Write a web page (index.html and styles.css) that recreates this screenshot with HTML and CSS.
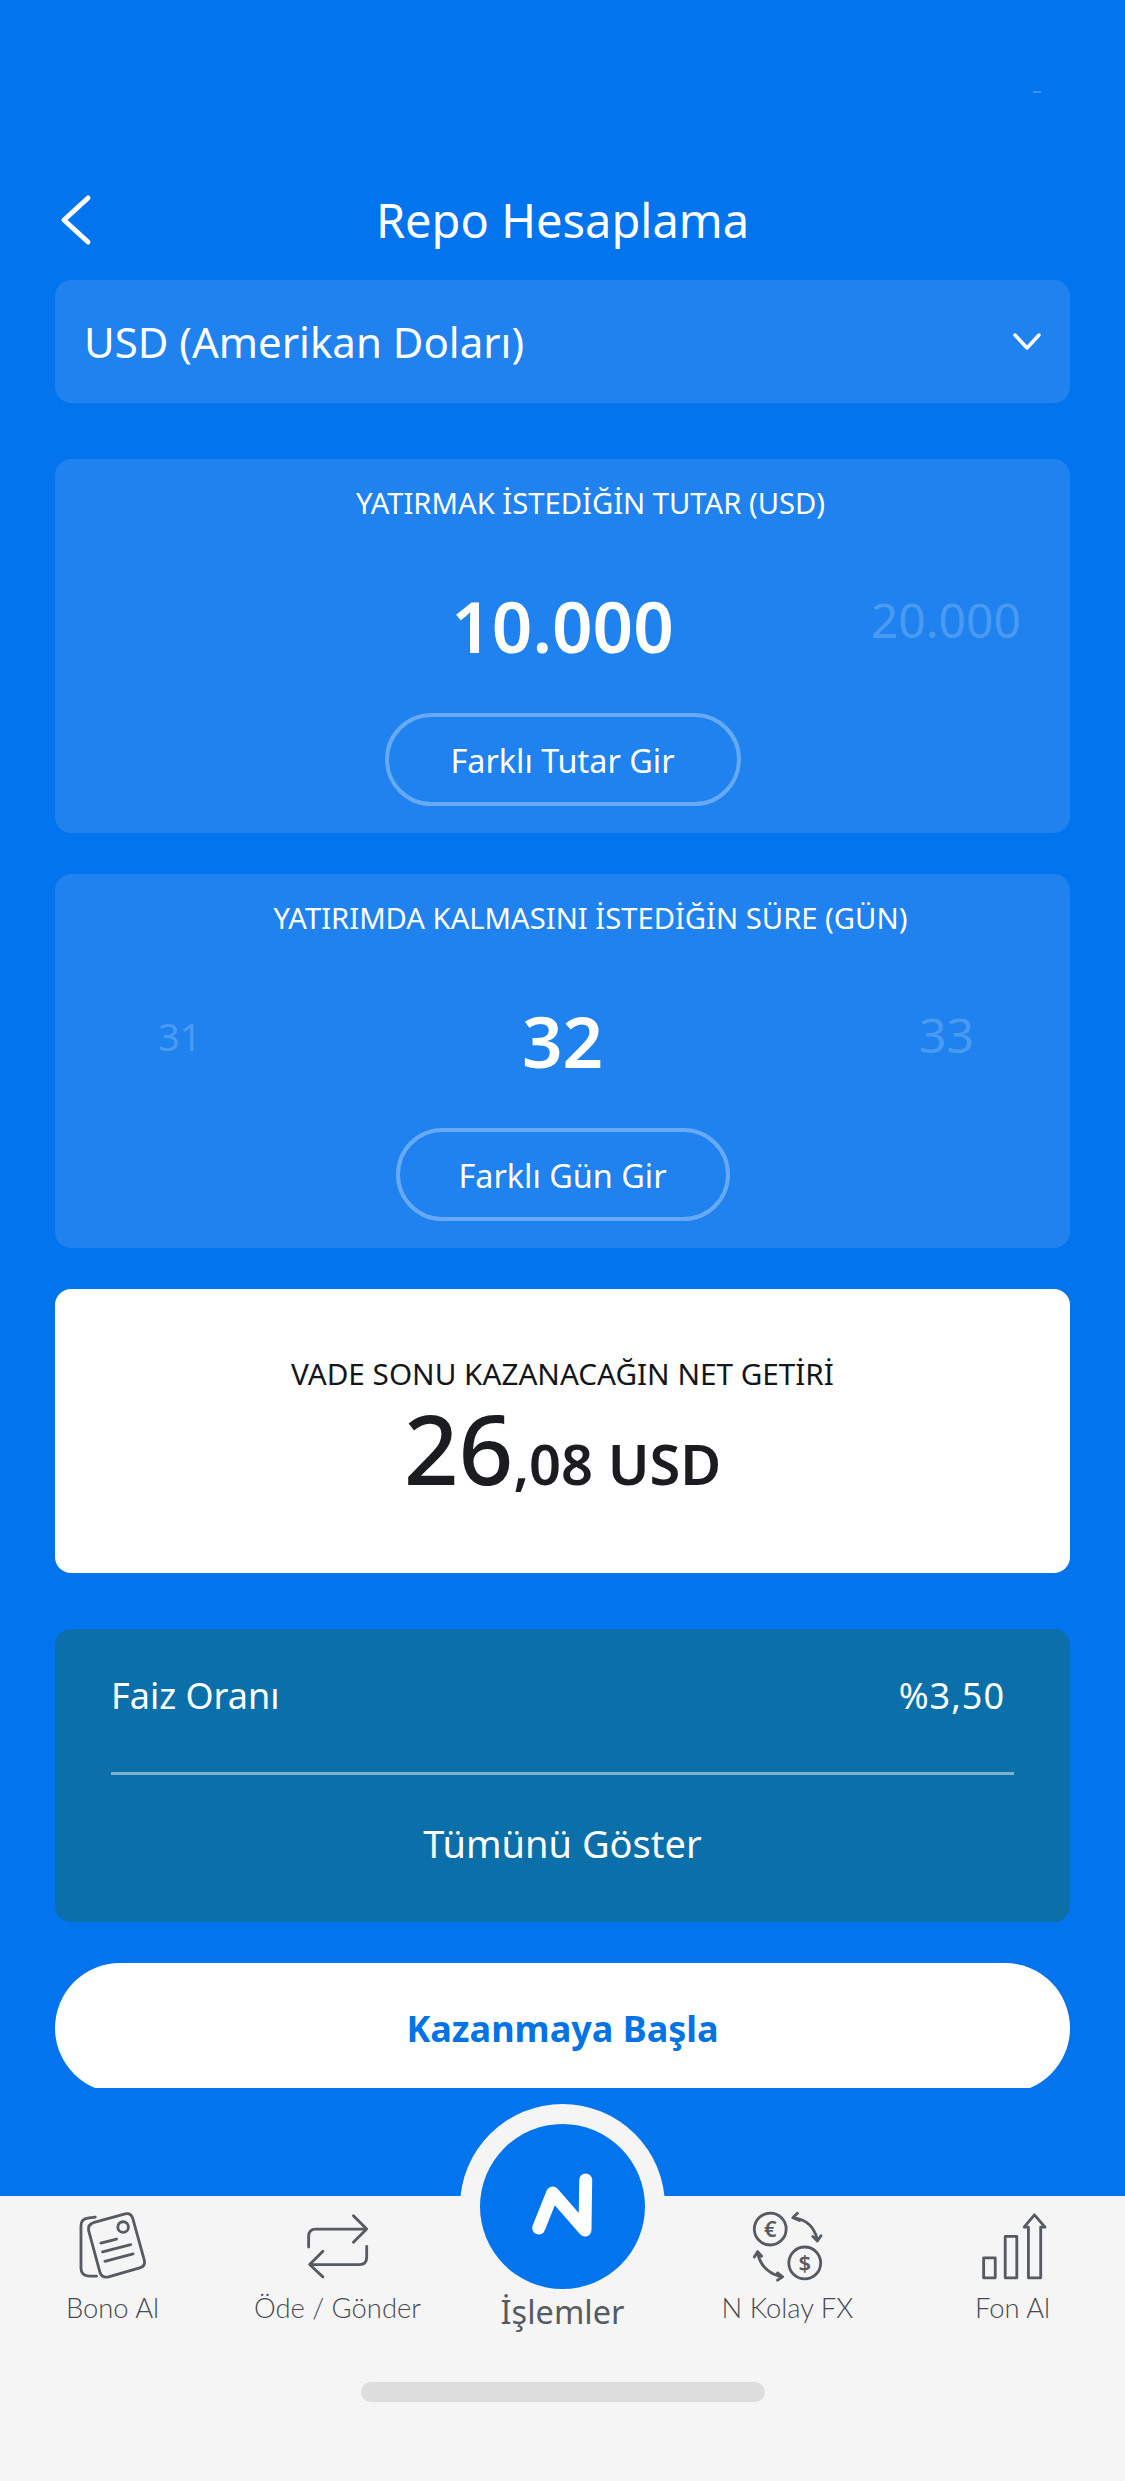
FILE: index.html
```html
<!DOCTYPE html>
<html lang="tr">
<head>
    <meta charset="UTF-8">
    <meta name="viewport" content="width=device-width, initial-scale=1.0">
    <title>Repo Hesaplama</title>
    <link rel="stylesheet" href="styles.css">
</head>
<body>
    <div class="screen">
        <div class="status-dash"></div>

        <!-- Header -->
        <header class="header">
            <svg class="back" viewBox="0 0 34 52"><path d="M29 4 L5 26 L29 48"/></svg>
            <h1>Repo Hesaplama</h1>
        </header>

        <main class="content">
            <!-- Currency -->
            <div class="card select-card">
                <span>USD (Amerikan Doları)</span>
                <svg class="chevron" viewBox="0 0 28 18"><path d="M2 2 L14 15 L26 2"/></svg>
            </div>

            <!-- Amount -->
            <section class="card picker-card">
                <h3 class="picker-label">YATIRMAK İSTEDİĞİN TUTAR (USD)</h3>
                <div class="picker-row">
                    <span class="side side-left"></span>
                    <span class="current">10.000</span>
                    <span class="side side-right amount-next">20.000</span>
                </div>
                <button class="outline-btn">Farklı Tutar Gir</button>
            </section>

            <!-- Duration -->
            <section class="card picker-card">
                <h3 class="picker-label">YATIRIMDA KALMASINI İSTEDİĞİN SÜRE (GÜN)</h3>
                <div class="picker-row">
                    <span class="side side-left small">31</span>
                    <span class="current">32</span>
                    <span class="side side-right">33</span>
                </div>
                <button class="outline-btn days-btn">Farklı Gün Gir</button>
            </section>

            <!-- Result -->
            <section class="result-card">
                <h3>VADE SONU KAZANACAĞIN NET GETİRİ</h3>
                <div class="result-value"><span class="whole">26</span><span class="rest">,08 USD</span></div>
            </section>

            <!-- Details -->
            <section class="detail-card">
                <div class="detail-row">
                    <span>Faiz Oranı</span>
                    <span class="rate">%3,50</span>
                </div>
                <div class="detail-line"></div>
                <div class="detail-all">Tümünü Göster</div>
            </section>

            <div class="cta-clip">
                <button class="cta">Kazanmaya Başla</button>
            </div>
        </main>

        <!-- Bottom navigation -->
        <nav class="bottom-nav">
            <div class="nav-grid">
                <a class="nav-item">
                    <svg viewBox="110 55 220 225">
                        <path d="M168 82 L145 85 Q125 88 125 108 L125 235 Q125 258 150 260 L172 260"/>
                        <path d="M165 98 L258 72 Q276 68 281 86 L316 212 Q320 230 302 235 L208 262 Q188 266 182 248 L148 122 Q145 104 165 98 Z"/>
                        <circle cx="252" cy="112" r="16"/>
                        <path d="M185 160 L232 148 M190 187 L275 165 M197 215 L282 193"/>
                    </svg>
                    <span>Bono Al</span>
                </a>
                <a class="nav-item">
                    <svg viewBox="782 55 220 225">
                        <path d="M805 172 L805 140 Q805 118 827 118 L978 118 M940 78 L980 118 L940 158"/>
                        <path d="M980 170 L980 203 Q980 225 958 225 L810 225 M848 185 L808 225 L848 262"/>
                    </svg>
                    <span>Öde / Gönder</span>
                </a>
                <a class="nav-item nav-main">
                    <div class="fab">
                        <svg viewBox="0 0 165 165"><path d="M58.7 104 L72.7 69 L105 106 L105.7 56"/></svg>
                    </div>
                    <span>İşlemler</span>
                </a>
                <a class="nav-item">
                    <svg viewBox="92 55 220 225">
                        <circle cx="150" cy="118" r="48"/>
                        <circle cx="254" cy="220" r="48"/>
                        <text class="coin" x="150" y="141">€</text>
                        <text class="coin" x="254" y="243">$</text>
                        <path d="M222 84 Q278 92 292 150 M218 84 L232 70 M218 84 L238 92 M292 154 L278 140 M292 154 L303 138"/>
                        <path d="M112 190 Q124 248 184 262 M112 186 L102 202 M112 186 L124 200 M187 262 L172 250 M187 262 L172 272"/>
                    </svg>
                    <span>N Kolay FX</span>
                </a>
                <a class="nav-item">
                    <svg viewBox="767 55 220 225">
                        <rect x="790" y="205" width="35" height="60"/>
                        <rect x="855" y="140" width="35" height="125"/>
                        <path d="M925 265 L925 112 L912 112 L943 75 L975 112 L962 112 L962 265 Z"/>
                    </svg>
                    <span>Fon Al</span>
                </a>
            </div>
            <div class="home-bar"></div>
        </nav>
    </div>
</body>
</html>
```

FILE: styles.css
```css
* {
    box-sizing: border-box;
}

body {
    margin: 0;
    background: #0274ed;
    font-family: "Noto Sans", "Open Sans", sans-serif;
    color: white;
}

.screen {
    position: relative;
    width: 1125px;
    height: 2481px;
    display: flex;
    flex-direction: column;
    background: #0274ed;
    overflow: hidden;
}

.status-dash {
    position: absolute;
    top: 91px;
    left: 1033px;
    width: 8px;
    height: 2px;
    background: #3f93f0;
}

.header {
    position: relative;
    height: 280px;
    padding-top: 190px;
    text-align: center;
}

.header h1 {
    margin: 0;
    font-size: 47px;
    font-weight: 400;
    line-height: 60px;
}

.back {
    position: absolute;
    left: 59px;
    top: 194px;
    width: 34px;
    height: 52px;
}

.back path {
    fill: none;
    stroke: white;
    stroke-width: 5;
    stroke-linecap: round;
    stroke-linejoin: round;
}

.content {
    flex: 1;
    padding: 0 55px;
}

.card {
    background: #1f82ee;
    border-radius: 16px;
}

.select-card {
    height: 123px;
    margin-bottom: 56px;
    padding: 0 29px;
    display: flex;
    align-items: center;
    justify-content: space-between;
    font-size: 42px;
}

.chevron {
    width: 28px;
    height: 18px;
}

.chevron path {
    fill: none;
    stroke: white;
    stroke-width: 3.5;
    stroke-linecap: round;
    stroke-linejoin: round;
}

.picker-card {
    height: 374px;
    margin-bottom: 41px;
    padding-top: 24px;
    display: flex;
    flex-direction: column;
    align-items: center;
}

.picker-label {
    margin: 0;
    padding-left: 56px;
    font-size: 29.2px;
    font-weight: 400;
    line-height: 40px;
}

.picker-row {
    position: relative;
    width: 100%;
    height: 166px;
    margin: 19px 0 5px;
    display: flex;
    align-items: center;
    justify-content: center;
}

.current {
    font-size: 71px;
    font-weight: 600;
}

.side {
    position: absolute;
    top: 50%;
    transform: translateY(-58%);
    font-size: 48px;
    color: #4a9af2;
}

.side-left {
    left: 103px;
}

.side-right {
    right: 96px;
}

.amount-next {
    right: 49px;
}

.small {
    font-size: 38px;
}

.outline-btn {
    width: 356px;
    height: 93px;
    background: none;
    border: 4px solid #66a9f4;
    border-radius: 47px;
    color: white;
    font-family: inherit;
    font-size: 32.4px;
}

.days-btn {
    width: 334px;
}

.result-card {
    height: 284px;
    margin-bottom: 56px;
    padding-top: 64px;
    background: white;
    border-radius: 16px;
    text-align: center;
    color: #14161a;
}

.result-card h3 {
    margin: 0;
    font-size: 29.7px;
    font-weight: 400;
    line-height: 42px;
}

.result-value {
    margin-top: 5px;
    color: #1a1c20;
    font-weight: 500;
    line-height: 96px;
}

.whole {
    font-size: 96px;
}

.rest {
    font-size: 56px;
    font-weight: 600;
}

.detail-card {
    height: 293px;
    margin-bottom: 41px;
    padding: 37px 56px 0;
    background: #0b70aa;
    border-radius: 16px;
}

.detail-row {
    display: flex;
    justify-content: space-between;
    padding-right: 9px;
    font-size: 36px;
    line-height: 60px;
}

.rate {
    letter-spacing: 1px;
}

.detail-line {
    height: 3px;
    margin-top: 46px;
    background: #7fb0cf;
}

.detail-all {
    margin-top: 38px;
    text-align: center;
    font-size: 38px;
    line-height: 60px;
}

.cta-clip {
    height: 125px;
    overflow: hidden;
}

.cta {
    display: block;
    width: 100%;
    height: 130px;
    background: white;
    border: none;
    border-radius: 65px;
    color: #0373e6;
    font-family: inherit;
    font-size: 36px;
    font-weight: 700;
}

.bottom-nav {
    position: relative;
    height: 285px;
    background: #f5f5f5;
}

.nav-grid {
    display: grid;
    grid-template-columns: repeat(5, 225px);
    padding-top: 12px;
}

.nav-item {
    display: flex;
    flex-direction: column;
    align-items: center;
    color: #454b50;
    font-family: Lato, sans-serif;
    font-size: 27.4px;
    font-weight: 300;
}

.nav-item svg {
    width: 73px;
    height: 75px;
}

.nav-item svg path,
.nav-item svg circle,
.nav-item svg rect {
    fill: none;
    stroke: #555b60;
    stroke-width: 8.5;
    stroke-linecap: round;
    stroke-linejoin: round;
}

.nav-item svg .coin {
    fill: #555b60;
    font-family: "Noto Sans", sans-serif;
    font-size: 66px;
    font-weight: 600;
    text-anchor: middle;
}

.nav-item span {
    margin-top: 7px;
    line-height: 36px;
}

.nav-main span {
    position: relative;
    margin-top: 86px;
    color: #555b60;
    font-family: "Noto Sans", sans-serif;
    font-size: 32.5px;
    font-weight: 400;
}

.fab {
    position: absolute;
    left: 460px;
    top: -92px;
    width: 205px;
    height: 205px;
    padding: 20px;
    background: #f5f5f5;
    border-radius: 50%;
}

.nav-item .fab svg {
    display: block;
    width: 165px;
    height: 165px;
    background: #0274ed;
    border-radius: 50%;
}

.nav-item .fab svg path {
    stroke: white;
    stroke-width: 13;
}

.home-bar {
    width: 404px;
    height: 20px;
    margin: 52px auto 0;
    background: #dcdddc;
    border-radius: 10px;
}
```
